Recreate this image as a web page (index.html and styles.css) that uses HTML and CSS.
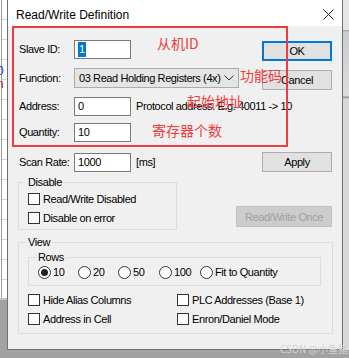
FILE: index.html
```html
<!DOCTYPE html>
<html lang="en">

<head>
    <meta charset="UTF-8">
    <meta name="viewport" content="width=device-width, initial-scale=1.0">
    <title>Read/Write Definition</title>
    <link rel="stylesheet" href="styles.css">
</head>

<body>
    <div class="screen">
        <div class="behind-left">
            <span class="peek-blue">0</span>
            <span class="peek-red">n</span>
        </div>

        <div class="dialog">
            <div class="titlebar">
                <span class="title">Read/Write Definition</span>
                <svg class="close" width="11" height="11" viewBox="0 0 11 11">
                    <path d="M0.5 0.5 L10.5 10.5 M10.5 0.5 L0.5 10.5" stroke="#222" stroke-width="1" fill="none" />
                </svg>
            </div>

            <div class="body">
                <div class="row r1">
                    <span class="lbl">Slave ID:</span>
                    <div class="field"><span class="picked">1</span></div>
                    <button class="btn btn-default low">OK</button>
                </div>
                <div class="row r2">
                    <span class="lbl">Function:</span>
                    <div class="select">
                        <span>03 Read Holding Registers (4x)</span>
                        <svg width="10" height="6" viewBox="0 0 10 6">
                            <path d="M0.5 0.5 L5 5 L9.5 0.5" stroke="#333" stroke-width="1" fill="none" />
                        </svg>
                    </div>
                    <button class="btn low">Cancel</button>
                </div>
                <div class="row r3">
                    <span class="lbl">Address:</span>
                    <div class="field">0</div>
                    <span class="hint">Protocol address. E.g. 40011 -&gt; 10</span>
                </div>
                <div class="row r4">
                    <span class="lbl">Quantity:</span>
                    <div class="field">10</div>
                </div>
                <div class="row r5">
                    <span class="lbl">Scan Rate:</span>
                    <div class="field">1000</div>
                    <span class="hint">[ms]</span>
                    <button class="btn">Apply</button>
                </div>

                <div class="dis-row">
                    <fieldset class="group g-disable">
                        <legend>Disable</legend>
                        <div class="chk"><span class="box"></span>Read/Write Disabled</div>
                        <div class="chk"><span class="box"></span>Disable on error</div>
                    </fieldset>
                    <button class="btn btn-off">Read/Write Once</button>
                </div>

                <fieldset class="group g-view">
                    <legend>View</legend>
                    <fieldset class="group g-rows">
                        <legend>Rows</legend>
                        <div class="radios">
                            <div class="radio w40"><span class="dot on"></span>10</div>
                            <div class="radio w40"><span class="dot"></span>20</div>
                            <div class="radio w41"><span class="dot"></span>50</div>
                            <div class="radio w41"><span class="dot"></span>100</div>
                            <div class="radio"><span class="dot"></span>Fit to Quantity</div>
                        </div>
                    </fieldset>
                    <div class="chk-grid">
                        <div class="chk"><span class="box"></span>Hide Alias Columns</div>
                        <div class="chk"><span class="box"></span>PLC Addresses (Base 1)</div>
                        <div class="chk"><span class="box"></span>Address in Cell</div>
                        <div class="chk"><span class="box"></span>Enron/Daniel Mode</div>
                    </div>
                </fieldset>
            </div>

            <!-- red notes drawn on top of the screenshot -->
            <div class="mark-box"></div>
            <span class="note n1">从机ID</span>
            <span class="note n2">功能码</span>
            <span class="note n3">起始地址</span>
            <span class="note n4">寄存器个数</span>
        </div>

        <div class="behind-right"></div>

        <span class="watermark">CSDN @小鱼猪</span>
    </div>
</body>

</html>
```

FILE: styles.css
```css
* {
    margin: 0;
    padding: 0;
    box-sizing: border-box;
}

body {
    width: 349px;
    height: 358px;
    overflow: hidden;
    font-family: "Liberation Sans", Arial, sans-serif;
    font-size: 11px;
    letter-spacing: -0.4px;
    color: #000;
}

.screen {
    position: relative;
    display: flex;
    align-items: flex-start;
    height: 358px;
    background-color: #a2a2a2;
}

.behind-left {
    position: relative;
    width: 7px;
    height: 300px;
    overflow: hidden;
    background:
        linear-gradient(to right, #fff 0, #fff 1px, #9a9a9a 1px, #9a9a9a 2px, transparent 2px),
        repeating-linear-gradient(to bottom, #fff 0, #fff 19px, #d6d6d6 19px, #d6d6d6 20px);
    background-color: #fff;
    border-bottom: 2px solid #b9c7da;
}

.peek-blue,
.peek-red {
    position: absolute;
    left: 0;
    width: 4px;
    overflow: hidden;
    font-size: 12px;
    line-height: 11px;
    text-indent: -3px;
}

.peek-blue {
    top: 66px;
    color: #1a3cc8;
}

.peek-red {
    top: 79px;
    color: #d0201a;
}

.dialog {
    position: relative;
    width: 336px;
    height: 350px;
    background-color: #f0f0f0;
    border: 1px solid #707070;
    border-top: none;
}

.behind-right {
    flex: 1;
    height: 350px;
    background: linear-gradient(to bottom, #e6e6e6 0, #e6e6e6 30px, #9aa0a8 30px, #c9ccd2 32px, #dcdcdc 96px, #8c8c8c 97px, #d8d8d8 99px, #d8d8d8 100%);
}

.titlebar {
    display: flex;
    align-items: center;
    height: 26px;
    padding: 3px 0 0 8px;
    background-color: #fff;
}

.title {
    font-size: 12px;
    letter-spacing: 0;
}

.close {
    margin-left: auto;
    margin-right: 8px;
}

.body {
    padding: 12px 10px 0 11px;
}

.row {
    display: flex;
    align-items: center;
    height: 22px;
    white-space: nowrap;
}

.r2 {
    margin-top: 7px;
}

.r3 {
    margin-top: 6px;
}

.r4 {
    margin-top: 4px;
}

.r5 {
    margin-top: 8px;
}

.lbl {
    width: 55px;
}

.field {
    width: 57px;
    height: 19px;
    padding-left: 3px;
    line-height: 17px;
    background-color: #fff;
    border: 1px solid #7a7a7a;
}

.picked {
    display: inline-block;
    padding: 0 1px;
    line-height: 15px;
    color: #fff;
    background-color: #0078d7;
}

.hint {
    margin-left: 5px;
}

.select {
    display: flex;
    align-items: center;
    justify-content: space-between;
    width: 165px;
    height: 20px;
    padding: 0 4px 0 4px;
    background-color: #e5e5e5;
    border: 1px solid #acacac;
}

.btn {
    margin-left: auto;
    width: 70px;
    height: 20px;
    font-family: inherit;
    font-size: 11px;
    letter-spacing: -0.4px;
    color: #000;
    background-color: #e1e1e1;
    border: 1px solid #adadad;
}

.low {
    align-self: flex-end;
    margin-bottom: -1px;
}

.btn-default {
    border: 2px solid #0078d7;
}

.btn-off {
    width: 96px;
    height: 21px;
    margin-bottom: 3px;
    color: #a0a0a0;
    background-color: #cccccc;
    border-color: #bfbfbf;
}

.group {
    border: 1px solid #dcdcdc;
    min-width: 0;
}

.group legend {
    margin-left: -2px;
    padding: 0 2px;
    line-height: 14px;
}

.dis-row {
    display: flex;
    align-items: flex-end;
    margin-top: 2px;
}

.g-disable {
    width: 159px;
    margin-left: -1px;
    padding: 0 9px 2px 9px;
}

.chk {
    display: flex;
    align-items: center;
    height: 19px;
    white-space: nowrap;
}

.box {
    width: 12px;
    height: 12px;
    margin-right: 3px;
    background-color: #fff;
    border: 1px solid #333;
}

.g-view {
    width: 315px;
    margin-top: 5px;
    margin-left: -1px;
    padding: 0 11px 5px 9px;
}

.g-rows {
    margin-top: 1px;
    padding: 0 0 5px 9px;
}

.radios {
    display: flex;
    align-items: center;
    height: 16px;
    white-space: nowrap;
}

.radio {
    display: flex;
    align-items: center;
}

.w40 {
    width: 40px;
}

.w41 {
    width: 41px;
}

.dot {
    position: relative;
    width: 13px;
    height: 13px;
    margin-right: 2px;
    border-radius: 50%;
    background-color: #fff;
    border: 1px solid #333;
}

.dot.on::after {
    content: "";
    position: absolute;
    left: 2px;
    top: 2px;
    width: 7px;
    height: 7px;
    border-radius: 50%;
    background-color: #222;
}

.chk-grid {
    display: grid;
    grid-template-columns: 149px auto;
    margin-top: 4px;
}

.mark-box {
    position: absolute;
    left: 4px;
    top: 26px;
    width: 276px;
    height: 121px;
    border: 2px solid #f03c3c;
}

.note {
    position: absolute;
    font-family: "Noto Sans CJK SC", sans-serif;
    font-size: 14px;
    line-height: 16px;
    letter-spacing: 0;
    color: #f03c3c;
}

.n1 {
    left: 149px;
    top: 35px;
}

.n2 {
    left: 232px;
    top: 67px;
}

.n3 {
    left: 179px;
    top: 93px;
}

.n4 {
    left: 144px;
    top: 122px;
}

.watermark {
    position: absolute;
    left: 280px;
    top: 341px;
    font-family: "Noto Sans CJK SC", sans-serif;
    font-size: 10px;
    letter-spacing: 0;
    color: #d4d4d4;
}
```
